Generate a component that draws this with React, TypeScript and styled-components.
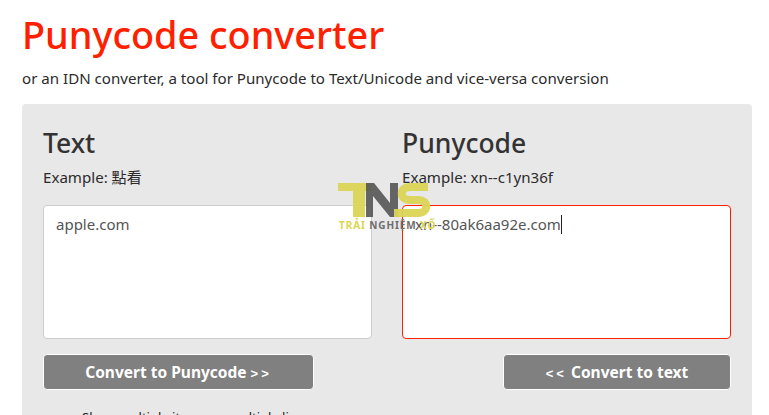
import { createGlobalStyle, styled } from 'styled-components';

const GlobalStyle = createGlobalStyle`
    html, body {
        margin: 0;
        height: 415px;
        overflow: hidden;
        background: #fff;
    }
`;

const Page = styled.div`
    width: 769px;
    height: 415px;
    overflow: hidden;
    box-sizing: border-box;
    padding: 0 17px 0 22px;
    font-family: 'Noto Sans', 'Noto Sans CJK TC', sans-serif;
    color: #333;
    position: relative;
`;

const Title = styled.h1`
    margin: 9px 0 0;
    font-size: 37.8px;
    line-height: 52px;
    font-weight: 500;
    color: #ff2000;
`;

const Subtitle = styled.p`
    margin: 7px 0 0;
    font-size: 15.1px;
    line-height: 20px;
    color: #2b2b2b;
`;

const Panel = styled.div`
    margin-top: 16px;
    height: 340px;
    box-sizing: border-box;
    padding: 21px 21px 0;
    background: #e8e8e8;
    border-radius: 4px;
    display: grid;
    grid-template-columns: 329px 329px;
    column-gap: 30px;
`;

const Column = styled.div`
    display: flex;
    flex-direction: column;
`;

const Heading = styled.h2`
    margin: 0;
    font-size: 26.5px;
    line-height: 36px;
    font-weight: 500;
    color: #333;
`;

const Example = styled.div`
    margin-top: 6px;
    font-size: 15.1px;
    line-height: 20px;
    color: #2b2b2b;
`;

const Field = styled.div<{ $active?: boolean }>`
    margin-top: 18px;
    height: 134px;
    box-sizing: border-box;
    padding: 8px 12px;
    background: #fff;
    border: 1px solid ${(p) => (p.$active ? '#ff2000' : '#ccc')};
    border-radius: 4px;
    font-size: 15px;
    line-height: 20px;
    color: #555;
`;

const Caret = styled.span`
    display: inline-block;
    width: 1px;
    height: 19px;
    background: #222;
    vertical-align: -4px;
`;

const Actions = styled.div<{ $end?: boolean }>`
    margin-top: 15px;
    display: flex;
    justify-content: ${(p) => (p.$end ? 'flex-end' : 'flex-start')};
`;

const Button = styled.button<{ $wide?: boolean }>`
    width: ${(p) => (p.$wide ? '271px' : '228px')};
    height: 36px;
    padding: 0;
    box-sizing: border-box;
    background: #808080;
    border: 1px solid #fff;
    border-radius: 4px;
    color: #fff;
    font-family: inherit;
    font-size: 15.5px;
    font-weight: 700;
`;

const Arrows = styled.span`
    font-family: 'Liberation Sans', sans-serif;
    font-size: 13px;
    letter-spacing: 3px;
`;

const Note = styled.div`
    margin: 18px 0 0 39px;
    font-size: 13px;
    line-height: 18px;
    color: #222;
`;

const Watermark = styled.div`
    position: absolute;
    left: 338px;
    top: 183px;
    width: 95px;
    height: 50px;
`;

const WatermarkLabel = styled.div`
    position: absolute;
    left: 1px;
    top: 35px;
    white-space: nowrap;
    font-size: 10px;
    line-height: 14px;
    font-weight: 700;
    letter-spacing: 0.9px;
    color: #6e6e6e;
    & > span {
        color: #dcd64e;
    }
`;

function WatermarkLogo() {
    return (
        <Watermark>
            <svg width="95" height="35" viewBox="0 0 95 35">
                <path d="M0 0h34v8H27v26H15V8H0z" fill="#dbd556" opacity="0.95" />
                <path d="M28 0h8l16 20V0h8v34h-8L35 13v21h-7z" fill="#555" opacity="0.9" />
                <path
                    d="M90 4H72C61 4 61 17 72 17h8C91 17 91 30 80 30H56"
                    fill="none"
                    stroke="#dbd556"
                    strokeWidth="8"
                    opacity="0.95"
                />
            </svg>
            <WatermarkLabel>
                <span>TRẢI</span> NGHIỆM <span>XỐ</span>
            </WatermarkLabel>
        </Watermark>
    );
}

export default function App() {
    return (
        <Page>
            <GlobalStyle />
            <Title>Punycode converter</Title>
            <Subtitle>or an IDN converter, a tool for Punycode to Text/Unicode and vice-versa conversion</Subtitle>
            <Panel>
                <Column>
                    <Heading>Text</Heading>
                    <Example>Example: 點看</Example>
                    <Field>apple.com</Field>
                    <Actions>
                        <Button $wide>
                            Convert to Punycode <Arrows>&gt;&gt;</Arrows>
                        </Button>
                    </Actions>
                    <Note>Show multiple items on multiple lines</Note>
                </Column>
                <Column>
                    <Heading>Punycode</Heading>
                    <Example>Example: xn--c1yn36f</Example>
                    <Field $active>
                        xn--80ak6aa92e.com
                        <Caret />
                    </Field>
                    <Actions $end>
                        <Button>
                            <Arrows>&lt;&lt;</Arrows> Convert to text
                        </Button>
                    </Actions>
                </Column>
            </Panel>
            <WatermarkLogo />
        </Page>
    );
}
